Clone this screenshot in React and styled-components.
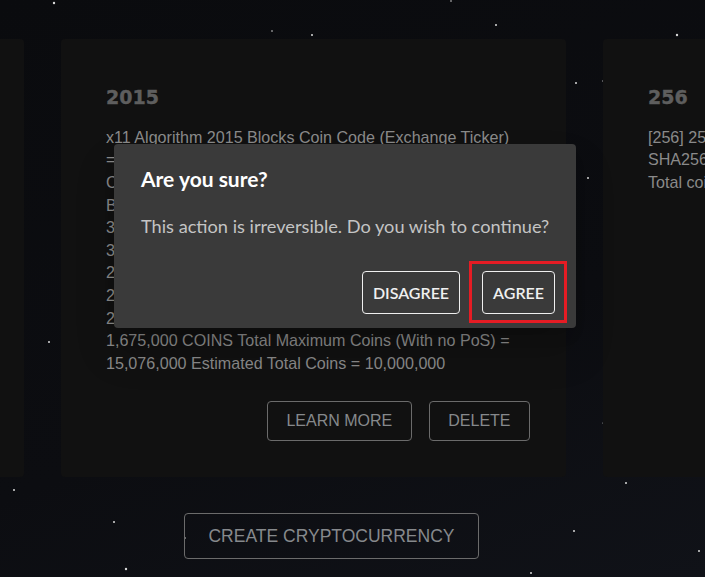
import styled, { createGlobalStyle } from 'styled-components'

const GlobalStyle = createGlobalStyle`
    html, body {
        margin: 0;
        padding: 0;
        width: 100%;
        height: 100%;
        overflow: hidden;
        background: #0b0c10;
    }
`

const Page = styled.div`
    position: relative;
    width: 705px;
    height: 577px;
    overflow: hidden;
    background: linear-gradient(160deg, #0a0b0e 0%, #0c0d11 60%, #101218 100%);
    font-family: 'Liberation Sans', Arial, sans-serif;
`

const Stars = styled.svg`
    position: absolute;
    inset: 0;
    pointer-events: none;
`

const Main = styled.div`
    position: relative;
    display: flex;
    flex-direction: column;
    padding-top: 39px;
`

const Track = styled.div`
    display: flex;
    gap: 37px;
    margin-left: -481px;
`

const Card = styled.div`
    flex: 0 0 505px;
    background: #111111;
    border-radius: 4px;
    padding: 47px 36px 36px 45px;
    box-sizing: border-box;
    display: flex;
    flex-direction: column;
`

const Year = styled.h2`
    margin: 0;
    font-family: 'DejaVu Sans', sans-serif;
    font-weight: bold;
    font-size: 19px;
    line-height: 22.8px;
    color: #5e5e5e;
    -webkit-text-stroke: 0.4px #5e5e5e;
`

const Description = styled.p`
    margin: 17px 0 0;
    font-size: 16.1px;
    line-height: 22.6px;
    color: #8a8a8a;
`

const Line = styled.span`
    display: block;
    white-space: nowrap;
`

const Actions = styled.div`
    display: flex;
    justify-content: flex-end;
    gap: 17px;
    margin-top: 27px;
`

const OutlineButton = styled.button`
    height: ${(p) => (p.$big ? '46px' : '40px')};
    padding: 0 ${(p) => (p.$big ? '23px' : '18.5px')};
    background: transparent;
    border: 1px solid #6b6b6b;
    border-radius: 4px;
    color: #86898c;
    font-family: 'Liberation Sans', Arial, sans-serif;
    font-size: ${(p) => (p.$big ? '17.5px' : '16px')};
    text-transform: uppercase;
    cursor: pointer;
`

const Footer = styled.div`
    display: flex;
    justify-content: center;
    padding: 36px 42px 0 0;
`

const Dialog = styled.div`
    position: absolute;
    left: 114px;
    top: 144px;
    width: 462px;
    box-sizing: border-box;
    background: #3a3a3a;
    border-radius: 4px;
    box-shadow: 0 11px 15px -7px rgba(0, 0, 0, 0.2), 0 24px 38px 3px rgba(0, 0, 0, 0.14);
    font-family: Lato, 'Open Sans', sans-serif;
    padding: 23px 9px 5px 27px;
`

const DialogTitle = styled.h3`
    margin: 0;
    font-size: 21px;
    font-weight: bold;
    line-height: 24px;
    color: #ffffff;
`

const DialogText = styled.p`
    margin: 25px 0 0;
    font-size: 18.2px;
    line-height: 21px;
    color: #c4c4c4;
`

const DialogActions = styled.div`
    display: flex;
    justify-content: flex-end;
    align-items: center;
    gap: 9px;
    margin-top: 24px;
`

const DialogButton = styled.button`
    height: 43px;
    padding: 0 10px;
    background: transparent;
    border: 1px solid #efefef;
    border-radius: 4px;
    color: #f0f0f0;
    font-family: Lato, 'Open Sans', sans-serif;
    font-size: 16px;
    font-weight: 600;
    cursor: pointer;
`

const Highlight = styled.span`
    display: flex;
    padding: 7px 9px 6px 10px;
    border: 3px solid #e51c24;
`

const stars = [
    [54, 3, 1.2], [272, 31, 0.8], [312, 35, 1], [451, 1, 0.8], [496, 25, 1],
    [677, 35, 1.2], [576, 83, 1], [603, 81, 0.7], [588, 178, 1], [49, 342, 1],
    [14, 490, 1], [114, 522, 1], [126, 569, 1.2], [626, 483, 1], [574, 531, 1],
    [699, 551, 1], [531, 573, 1], [603, 423, 0.6], [185, 538, 0.8],
]

const leftLines = [
    'x11 Algorithm 2014 Blocks Coin Code (Exchange Ticker)',
    '= X11 Coin Type = Proof of Work',
]

const middleLines = [
    'x11 Algorithm 2015 Blocks Coin Code (Exchange Ticker)',
    '= X11C Coin Type = Proof of Work / Proof of Stake',
    'Coins Per Block: 350 Block Time = 60 Seconds',
    'Block Reward Schedule (Blocks 1 - 5,000)',
    '350 COINS Per Block Blocks 5,001 - 10,000 =',
    '300 COINS Per Block Blocks 10,001 - 15,000 =',
    '250 COINS Per Block Blocks 15,001 - 20,000 =',
    '200 COINS Per Block Blocks 20,001 - 25,000 =',
    '200 COINS Per Block Total Premine =',
    '1,675,000 COINS Total Maximum Coins (With no PoS) =',
    '15,076,000 Estimated Total Coins = 10,000,000',
]

const rightLines = [
    '[256] 256 Coin Code (Exchange Ticker) = TSC',
    'SHA256 Algorithm Block Time = 10 Minutes',
    'Total coins = 21,000,000',
]

const cards = [
    { year: '2014', lines: leftLines },
    { year: '2015', lines: middleLines },
    { year: '256', lines: rightLines },
]

export default function App() {
    return (
        <Page>
            <GlobalStyle />
            <Stars width='705' height='577'>
                {stars.map(([x, y, r], i) => (
                    <circle key={i} cx={x} cy={y} r={r} fill='#d8d8d8' />
                ))}
            </Stars>
            <Main>
                <Track>
                    {cards.map((card) => (
                        <Card key={card.year}>
                            <Year>{card.year}</Year>
                            <Description>
                                {card.lines.map((line) => (
                                    <Line key={line}>{line}</Line>
                                ))}
                            </Description>
                            <Actions>
                                <OutlineButton>Learn More</OutlineButton>
                                <OutlineButton>Delete</OutlineButton>
                            </Actions>
                        </Card>
                    ))}
                </Track>
                <Footer>
                    <OutlineButton $big>Create Cryptocurrency</OutlineButton>
                </Footer>
            </Main>
            <Dialog>
                <DialogTitle>Are you sure?</DialogTitle>
                <DialogText>This action is irreversible. Do you wish to continue?</DialogText>
                <DialogActions>
                    <DialogButton>DISAGREE</DialogButton>
                    <Highlight>
                        <DialogButton>AGREE</DialogButton>
                    </Highlight>
                </DialogActions>
            </Dialog>
        </Page>
    )
}
